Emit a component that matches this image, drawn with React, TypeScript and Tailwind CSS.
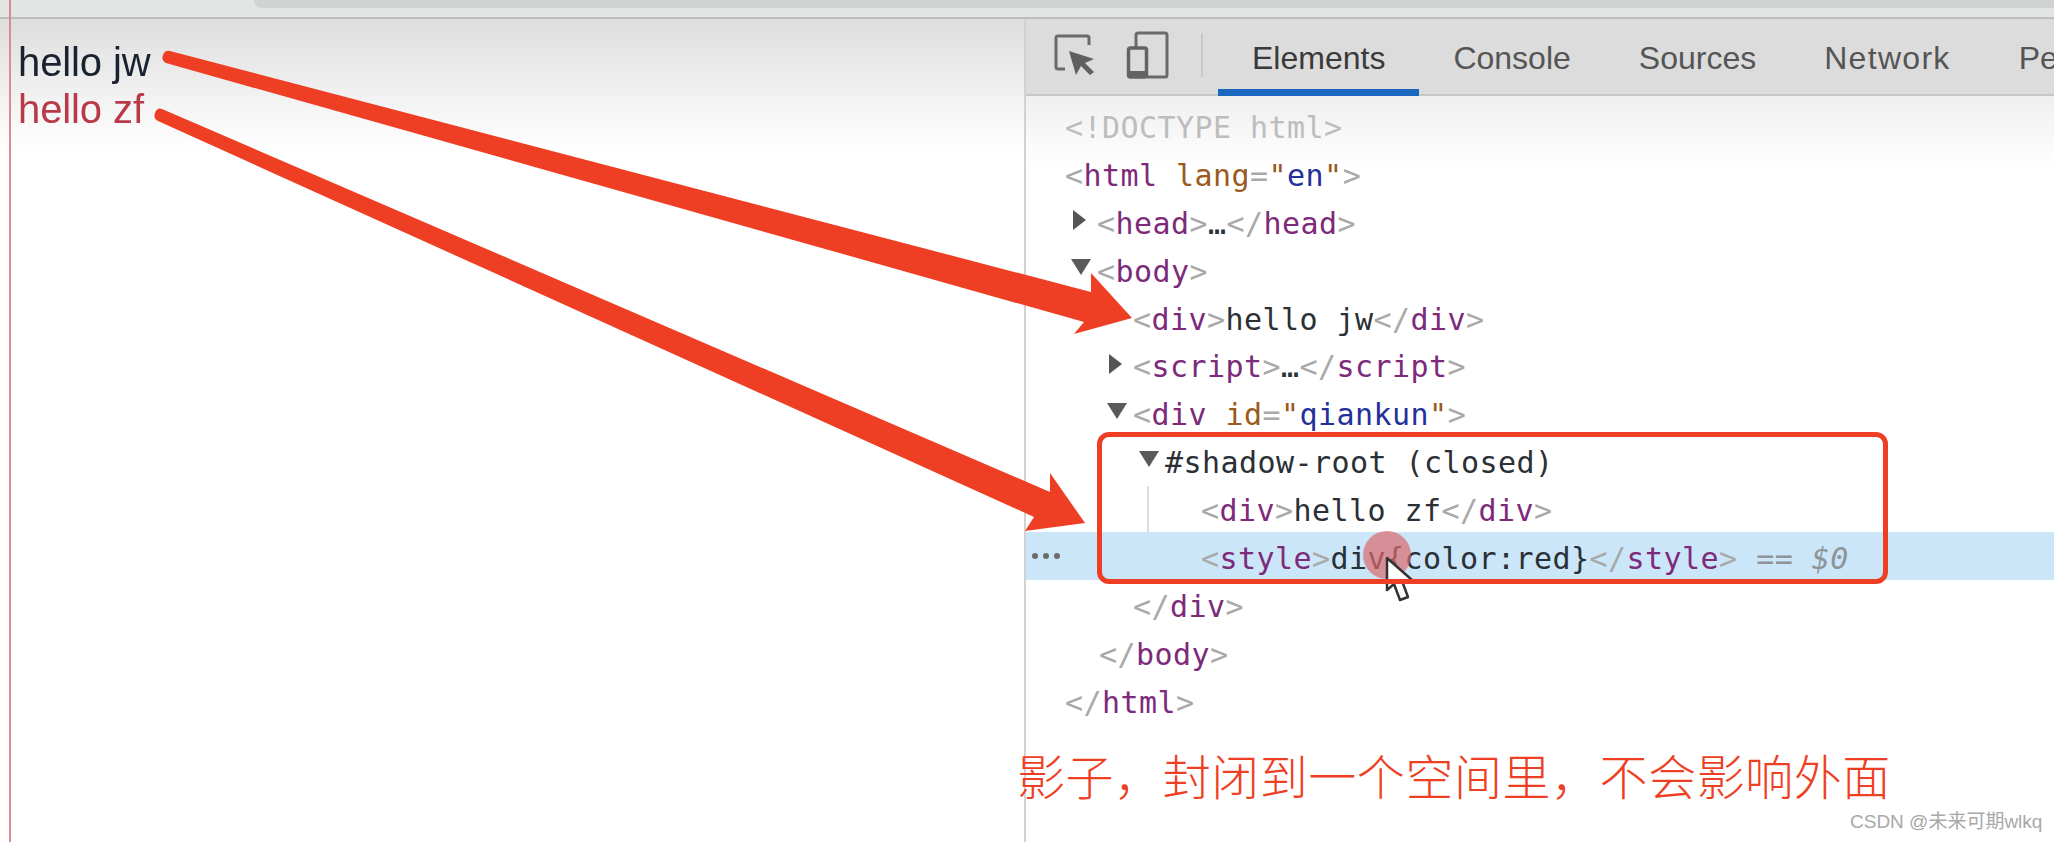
import React from "react";

const B = ({ children }: { children: React.ReactNode }) => <span className="text-[#a9a9a9]">{children}</span>;
const T = ({ children }: { children: React.ReactNode }) => <span className="text-[#7d2a7b]">{children}</span>;
const A = ({ children }: { children: React.ReactNode }) => <span className="text-[#9a5a20]">{children}</span>;
const V = ({ children }: { children: React.ReactNode }) => <span className="text-[#24309a]">{children}</span>;
const X = ({ children }: { children: React.ReactNode }) => <span className="text-[#2b2f36]">{children}</span>;

const Right = () => (
  <svg width="14" height="20" viewBox="0 0 14 20" className="shrink-0 -ml-[25px] mr-[11px] -mt-[6px]">
    <path d="M1 0 L14 10 L1 20 Z" fill="#555" />
  </svg>
);
const Down = () => (
  <svg width="20" height="16" viewBox="0 0 20 16" className="shrink-0 -ml-[26px] mr-[6px] -mt-[8px]">
    <path d="M0 0 L20 0 L10 16 Z" fill="#5a5a5a" />
  </svg>
);

const rowBase = "relative flex items-center h-[47.9px] pt-[5px] whitespace-pre";

const Tab = ({ label, active, wide }: { label: string; active?: boolean; wide?: boolean }) => (
  <div
    className={
      active
        ? "h-[77px] px-[34px] pt-[8px] flex items-center border-b-[7px] border-[#1a68c0] text-[#3a3a3a]"
        : wide
          ? "h-[75px] px-[34px] pt-[2px] flex items-center text-[#555555] tracking-[1.3px]"
          : "h-[75px] px-[34px] pt-[2px] flex items-center text-[#555555]"
    }
  >
    {label}
  </div>
);

export default function App() {
  return (
    <div className="relative w-[2054px] h-[842px] overflow-hidden bg-white flex flex-col font-['Liberation_Sans',sans-serif]">
      {/* browser chrome sliver */}
      <div className="h-[19px] shrink-0 bg-[#e3e4e4] border-b-2 border-[#bdbdbd] pl-[254px]">
        <div className="h-[8px] bg-[#d1d3d3] rounded-bl-[14px]" />
      </div>

      <div className="flex flex-1 min-h-0">
        {/* page */}
        <div className="w-[1024px] shrink-0 pl-[18px] pt-[20px] text-[40px] leading-[47px] tracking-[-0.1px] bg-[linear-gradient(#dedede,#ffffff_130px)]">
          <div className="text-[#1a2230] blur-[0.4px]">hello jw</div>
          <div className="text-[#b83a48] blur-[0.4px]">hello zf</div>
        </div>

        {/* devtools */}
        <div className="flex-1 min-w-0 border-l-2 border-[#d2d2d2] flex flex-col overflow-hidden">
          <div className="h-[77px] shrink-0 flex items-start bg-[#dcdcdc] border-b-2 border-[#c6c6c6] text-[32px] pl-[25px]">
            <svg width="48" height="48" viewBox="0 0 48 48" className="mt-[12px] shrink-0 blur-[0.4px]">
              <path d="M14 38 H7 Q5 38 5 36 V7 Q5 5 7 5 H36 Q38 5 38 7 V14" fill="none" stroke="#6a6a6a" strokeWidth="3" />
              <path d="M18 20 L43 28 L34 32 L43 41 L39 44 L30 35 L25 44 Z" fill="#5f5f5f" />
            </svg>
            <svg width="48" height="48" viewBox="0 0 48 48" className="ml-[24px] mt-[12px] shrink-0 blur-[0.4px]">
              <path d="M13 17 V4 Q13 2 15 2 H42 Q44 2 44 4 V44 Q44 46 42 46 H24" fill="none" stroke="#6a6a6a" strokeWidth="3" />
              <rect x="5.5" y="17" width="18" height="29" rx="2" fill="none" stroke="#636363" strokeWidth="3.5" />
              <rect x="5" y="40" width="19" height="6" fill="#636363" />
            </svg>
            <div className="w-[2px] h-[44px] mt-[14px] ml-[30px] mr-[15px] bg-[#c8c8c8] shrink-0" />
            <Tab label="Elements" active />
            <Tab label="Console" />
            <Tab label="Sources" />
            <Tab label="Network" wide />
            <Tab label="Pe" />
          </div>

          <div className="flex-1 pt-[5px] font-['DejaVu_Sans_Mono',monospace] text-[30px] tracking-[0.44px] bg-[linear-gradient(#efefef,#ffffff_70px)]">
            <div className={`${rowBase} pl-[39px] text-[#bdbdbd]`}>{"<!DOCTYPE html>"}</div>
            <div className={`${rowBase} pl-[39px]`}>
              <span>
                <B>{"<"}</B><T>html</T> <A>lang</A><B>=</B><A>"</A><V>en</V><A>"</A><B>{">"}</B>
              </span>
            </div>
            <div className={`${rowBase} pl-[71px]`}>
              <Right />
              <span>
                <B>{"<"}</B><T>head</T><B>{">"}</B><X>…</X><B>{"</"}</B><T>head</T><B>{">"}</B>
              </span>
            </div>
            <div className={`${rowBase} pl-[71px]`}>
              <Down />
              <span>
                <B>{"<"}</B><T>body</T><B>{">"}</B>
              </span>
            </div>
            <div className={`${rowBase} pl-[107px]`}>
              <span>
                <B>{"<"}</B><T>div</T><B>{">"}</B><X>hello jw</X><B>{"</"}</B><T>div</T><B>{">"}</B>
              </span>
            </div>
            <div className={`${rowBase} pl-[107px]`}>
              <Right />
              <span>
                <B>{"<"}</B><T>script</T><B>{">"}</B><X>…</X><B>{"</"}</B><T>script</T><B>{">"}</B>
              </span>
            </div>
            <div className={`${rowBase} pl-[107px]`}>
              <Down />
              <span>
                <B>{"<"}</B><T>div</T> <A>id</A><B>=</B><A>"</A><V>qiankun</V><A>"</A><B>{">"}</B>
              </span>
            </div>
            <div className={`${rowBase} pl-[139px]`}>
              <Down />
              <X>#shadow-root (closed)</X>
            </div>
            <div className={`${rowBase} pl-[175px]`}>
              <span className="absolute left-[121px] top-[2px] bottom-0 w-[2px] bg-[#dddddd]" />
              <span>
                <B>{"<"}</B><T>div</T><B>{">"}</B><X>hello zf</X><B>{"</"}</B><T>div</T><B>{">"}</B>
              </span>
            </div>
            <div className={`${rowBase} pl-[175px] bg-[#cbe6f8]`}>
              <span className="absolute left-[6px] top-[21px] flex gap-[5px]">
                <span className="w-[6px] h-[6px] rounded-full bg-[#6b6b6b]" />
                <span className="w-[6px] h-[6px] rounded-full bg-[#6b6b6b]" />
                <span className="w-[6px] h-[6px] rounded-full bg-[#6b6b6b]" />
              </span>
              <span>
                <B>{"<"}</B><T>style</T><B>{">"}</B><X>{"div{color:red}"}</X><B>{"</"}</B><T>style</T><B>{">"}</B>
                <span className="text-[#8f9499]"> == </span>
                <span className="italic text-[#8f9499]">$0</span>
              </span>
            </div>
            <div className={`${rowBase} pl-[107px]`}>
              <span>
                <B>{"</"}</B><T>div</T><B>{">"}</B>
              </span>
            </div>
            <div className={`${rowBase} pl-[73px]`}>
              <span>
                <B>{"</"}</B><T>body</T><B>{">"}</B>
              </span>
            </div>
            <div className={`${rowBase} pl-[39px]`}>
              <span>
                <B>{"</"}</B><T>html</T><B>{">"}</B>
              </span>
            </div>
          </div>
        </div>
      </div>

      {/* margin guide line across the page */}
      <div className="absolute left-[9px] top-0 bottom-0 w-[2px] bg-[#d98d92]" />

      {/* annotations */}
      <svg width="2054" height="842" viewBox="0 0 2054 842" className="absolute inset-0 pointer-events-none">
        <circle cx="1387" cy="555" r="24" fill="#dc6a6e" fillOpacity="0.7" />
        <path
          d="M1387 558 L1387 590 L1394 584 L1400 600 L1408 597 L1402 581 L1412 580 Z"
          fill="#ffffff"
          stroke="#333333"
          strokeWidth="2.5"
          strokeLinejoin="round"
        />
        <path
          d="M163 55 Q165 50 170 51 L1091 292 L1091 273 L1132 318 L1074 334 L1084 322 L166 63 Q161 60 163 55 Z"
          fill="#ee3f24"
        />
        <path
          d="M155 113 Q157 107 162 109 L1050 492 L1050 473 L1085 523 L1025 531 L1034 517 L158 121 Q153 118 155 113 Z"
          fill="#ee3f24"
        />
      </svg>
      <div className="absolute left-[1097px] top-[432px] w-[791px] h-[152px] rounded-[12px] border-[5px] border-[#ee3f24]" />
      <div className="absolute left-[1017px] top-[741px] text-[48px] leading-[66px] tracking-[0.55px] whitespace-nowrap text-[#ee3f24] font-['Noto_Sans_CJK_SC',sans-serif] font-light">
        {"影子\uFF0C封闭到一个空间里\uFF0C不会影响外面"}
      </div>
      <div className="absolute left-[1850px] top-[810px] text-[19px] leading-[24px] whitespace-nowrap text-[#a8a8a8] font-['Liberation_Sans','Noto_Sans_CJK_SC',sans-serif]">
        CSDN @未来可期wlkq
      </div>
    </div>
  );
}
